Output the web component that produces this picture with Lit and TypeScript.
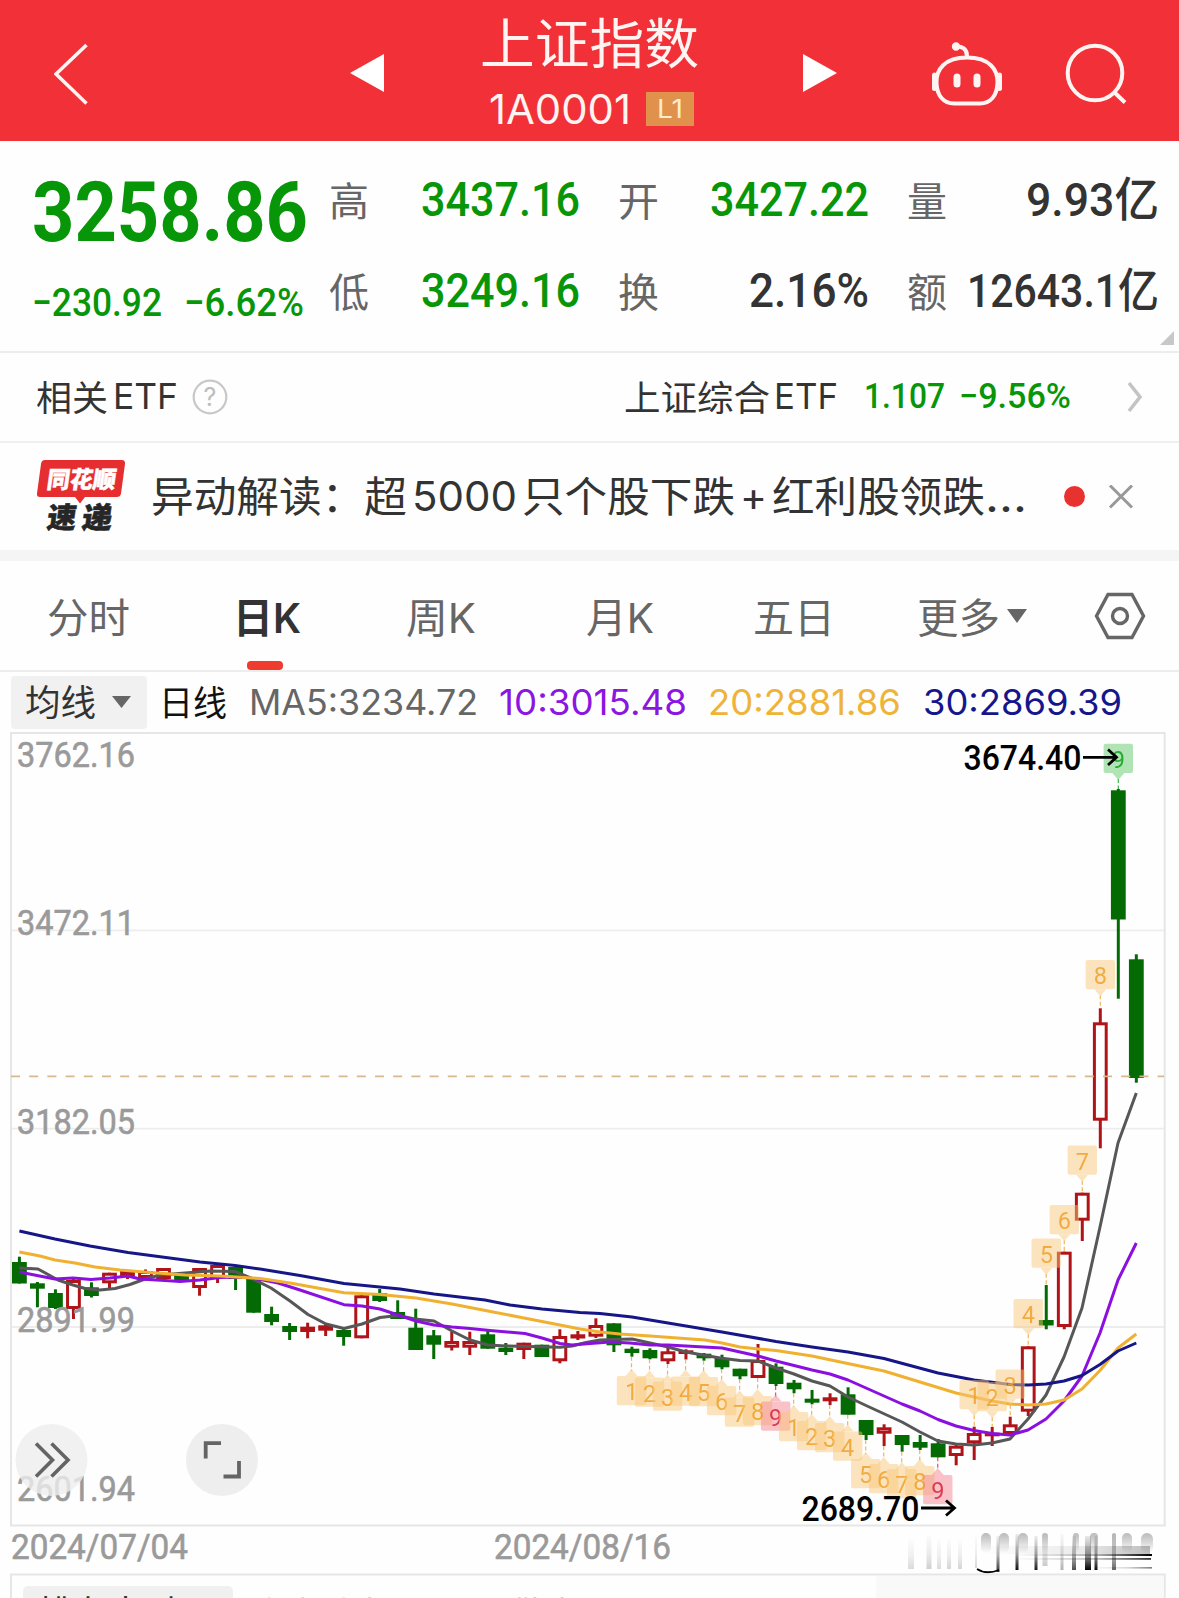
import { LitElement, html, svg, css } from "lit";
import { customElement } from "lit/decorators.js";

const DIN = "din";
const SANS = "sans";

/** A run of text set to an exact advance width; the box is as tall as the capitals, drop lowers the baseline. */
const run = (text: string, width: number, size: number, cls: string, family = DIN, drop = 0) => {
  const cap = Math.round(size * 0.715 * 10) / 10;
  return html`<svg class="run ${family} ${cls}" width=${width} height=${cap}>
    <text x="0" y=${cap + drop} font-size=${size} textLength=${width} lengthAdjust="spacingAndGlyphs">${text}</text>
  </svg>`;
};

/** Candle: direction, open/close top, open/close bottom, high, low (chart units). */
type Candle = ["g" | "r", number, number, number, number];
const CANDLES: Candle[] = [
  ["g", 1262, 1283.5, 1256.7, 1283.5], ["g", 1283.3, 1288.7, 1282, 1307.3], ["g", 1293, 1308, 1289.3, 1309],
  ["r", 1280, 1309, 1279, 1319], ["g", 1287.3, 1296, 1282.3, 1297.5], ["r", 1272.7, 1283.3, 1272.7, 1288],
  ["r", 1271, 1277, 1271, 1279], ["r", 1271, 1278, 1269.5, 1278], ["r", 1268, 1279, 1268, 1279],
  ["g", 1274, 1280, 1274, 1280], ["r", 1268, 1288, 1268, 1295.7], ["r", 1265, 1278, 1264.5, 1283],
  ["g", 1267, 1279, 1267, 1290], ["g", 1279, 1312.7, 1279, 1312.7], ["g", 1314, 1322, 1306.7, 1325.3],
  ["g", 1326, 1332, 1323, 1340], ["r", 1326.7, 1332, 1322.7, 1338.3], ["r", 1325.3, 1330.7, 1323, 1336],
  ["g", 1330, 1337, 1329, 1345.7], ["r", 1295.3, 1338.3, 1295.3, 1338.3], ["g", 1293.3, 1301, 1289, 1302],
  ["g", 1312, 1319, 1300.3, 1319], ["g", 1327.7, 1350, 1308.7, 1350], ["g", 1335.3, 1344.7, 1330, 1359],
  ["r", 1341, 1347.7, 1331.7, 1350.5], ["r", 1341, 1347.7, 1331.7, 1355], ["g", 1334.3, 1348.7, 1331, 1348.7],
  ["g", 1347.7, 1352, 1343, 1355], ["r", 1342.7, 1350, 1342.7, 1359], ["g", 1344.7, 1357, 1344.7, 1357],
  ["r", 1336, 1361.3, 1329.3, 1363.3], ["r", 1334.3, 1338.5, 1331, 1340], ["r", 1325, 1336.7, 1318.3, 1338],
  ["g", 1323.3, 1345.3, 1323.3, 1352], ["g", 1348.7, 1353, 1346.7, 1356.7], ["g", 1350, 1358.3, 1348.3, 1359.3],
  ["r", 1351.3, 1361.3, 1347.7, 1364], ["r", 1350.3, 1354, 1349.3, 1359.5], ["g", 1353.7, 1358.3, 1353, 1360.7],
  ["g", 1358, 1367.3, 1354.7, 1369.3], ["g", 1368.7, 1376.3, 1368.7, 1379.3], ["r", 1360, 1378, 1344, 1378],
  ["g", 1366.7, 1384, 1363.3, 1386], ["g", 1382.7, 1389.3, 1380, 1393.3], ["g", 1398.7, 1402.7, 1390, 1404.3],
  ["r", 1397.3, 1401.3, 1393.3, 1405], ["g", 1394.3, 1414.7, 1387.3, 1414.7], ["g", 1420, 1435, 1420, 1440],
  ["r", 1427.3, 1433.7, 1424.3, 1446], ["g", 1435, 1445, 1435, 1451.7], ["g", 1442, 1447.7, 1435, 1450],
  ["g", 1443.3, 1457.3, 1439, 1457.3], ["r", 1445.7, 1456, 1443, 1465.3], ["r", 1433, 1443.3, 1426.7, 1460],
  ["r", 1432.7, 1436, 1427, 1446], ["r", 1424.3, 1434, 1416.7, 1434], ["r", 1346.3, 1411.7, 1346.3, 1416],
  ["g", 1320, 1325.5, 1285, 1329.3], ["r", 1251.7, 1327, 1251.7, 1329.3], ["r", 1192.7, 1220.7, 1192.7, 1241],
  ["r", 1022.3, 1120.7, 1008.3, 1148.3], ["g", 790.3, 919.5, 789, 998.7], ["g", 959.3, 1078, 954.3, 1082.7],
];
const xAt = (i: number) => 19.4 + i * 18.015;

const AVERAGES: [string, string][] = [
  ["#575757", "19.4,1268 38,1269 58,1280 73,1285 85,1288.5 100,1290 115,1288.5 130,1284.5 145,1279 160,1275 185,1273 210,1271 235,1271.5 253,1279 271,1288 290,1301 308,1314.5 326,1324 344,1328.5 362,1324 380,1317.5 398,1315.5 415,1319 434,1321 452,1331 470,1340 488,1345 506,1346 560,1347.3 572,1346 586,1342.5 600,1340 614,1339.5 632,1339 650,1343 668,1347 686,1352 720,1358 740,1360.5 758,1361 776,1368 794,1374 812,1381 830,1386 848,1397 866,1405.5 902,1422 920,1432 938,1441 956,1444 974,1445 992,1443 1010,1439 1028,1419 1046,1395 1064,1357 1082,1308 1100,1227 1118,1143 1136.3,1093"],
  ["#8b10e0", "19.4,1272 37,1275.5 55,1279 73,1278 91,1279.5 110,1278 128,1276 140,1279 165,1280.5 180,1281.5 200,1280 220,1277.5 240,1277 258,1279 278,1283 300,1290 344,1304.7 362,1306 380,1309 398,1315 416,1321 434,1325 452,1327 470,1328.5 490,1330.5 525,1333.5 542,1338 560,1343.5 572,1345 590,1343.5 610,1342 630,1343 650,1345 668,1345 722,1348 740,1352 758,1356 776,1361 812,1370 830,1374 848,1380 866,1388 902,1404 920,1411 938,1419.5 956,1426 974,1430.5 992,1433.5 1010,1435 1028,1430 1046,1419 1064,1401 1082,1376 1100,1333 1118,1280 1136.3,1243"],
  ["#f0b030", "19.4,1252 40,1256 55,1260 75,1263 95,1267 120,1270 150,1272.5 185,1275 220,1276 260,1278.5 290,1283 344,1292.7 380,1294.5 416,1298 452,1304 488,1311 524,1318 560,1325 580,1329 600,1332 620,1334 650,1336 705,1340 722,1343 740,1347 758,1349 776,1350.5 812,1356 850,1364 884,1371 920,1382 956,1393 992,1401 1010,1404 1028,1405 1046,1404 1064,1400 1082,1389 1100,1370.5 1118,1348 1136.3,1334"],
  ["#161687", "19.4,1231 55,1239 90,1246 128,1252.5 200,1262 235,1265.5 260,1269 300,1275.5 344,1283.5 400,1289 434,1294 485,1300 510,1305 542,1309 580,1312.5 600,1313.5 632,1317 668,1323 722,1332 776,1341.5 812,1347 848,1352 884,1358.5 938,1373 974,1380 1010,1384.5 1028,1385 1046,1384 1064,1381 1082,1375.5 1100,1364.5 1118,1351 1136.3,1343"],
];

/** Sequence tag: digit, candle index, top of its box, side of the candle, tone. */
type Tag = [number, number, number, "up" | "down", "amber" | "pink" | "green"];
const TAGS: Tag[] = [
  [1, 34, 1376, "down", "amber"], [2, 35, 1377.5, "down", "amber"], [3, 36, 1381.5, "down", "amber"],
  [4, 37, 1376.5, "down", "amber"], [5, 38, 1377, "down", "amber"], [6, 39, 1386, "down", "amber"],
  [7, 40, 1397.5, "down", "amber"], [8, 41, 1396, "down", "amber"], [9, 42, 1401.5, "down", "pink"],
  [1, 43, 1412, "down", "amber"], [2, 44, 1421, "down", "amber"], [3, 45, 1423, "down", "amber"],
  [4, 46, 1431.5, "down", "amber"], [5, 47, 1459, "down", "amber"], [6, 48, 1464, "down", "amber"],
  [7, 49, 1469, "down", "amber"], [8, 50, 1466, "down", "amber"], [9, 51, 1475, "down", "pink"],
  [1, 53, 1380, "up", "amber"], [2, 54, 1382, "up", "amber"], [3, 55, 1369.5, "up", "amber"],
  [4, 56, 1299, "up", "amber"], [5, 57, 1238.5, "up", "amber"], [6, 58, 1205, "up", "amber"],
  [7, 59, 1145.5, "up", "amber"], [8, 60, 960, "up", "amber"], [9, 61, 743.7, "up", "green"],
];
const TONES = {
  amber: ["#f9c678", "#f0a22c"],
  pink: ["#f5808c", "#d8243c"],
  green: ["#5cc862", "#10a01c"],
};

/** Vertical streaks of the mark under the chart: x, width, top, bottom, strength. */
const STREAKS: [number, number, number, number, number][] = [
  [911, 6, 1540, 1569, 0.14], [929, 5, 1536, 1569, 0.18], [939, 4, 1540, 1569, 0.14], [949, 4, 1540, 1569, 0.16],
  [960, 4, 1540, 1569, 0.16], [976, 2, 1536, 1568, 0.15], [998, 3, 1536, 1572, 0.8], [1017, 3, 1534, 1570, 0.95],
  [1036, 3, 1536, 1570, 0.9], [1045, 5, 1534, 1566, 0.2], [1062, 3, 1534, 1570, 0.3], [1074, 4, 1536, 1570, 0.7],
  [1088, 6, 1536, 1570, 1], [1096, 3, 1536, 1570, 0.95], [1114, 4, 1534, 1570, 0.6],
];
const SMUDGES: [number, number][] = [[986, 5], [1004, 5], [1023, 5], [1045, 3], [1076, 3], [1094, 4], [1114, 2], [1127, 5], [1147, 6]];

@customElement("kline-chart")
class KlineChart extends LitElement {
  static styles = css`
    :host { display: block; }
    svg { display: block; }
    text { font-family: Roboto, "Liberation Sans", sans-serif; }
    .axis { fill: #9a9a9a; stroke: #9a9a9a; stroke-width: 0.6px; font-size: 35px; }
    .extreme { fill: #000; font-size: 35px; font-weight: 500; }
    .digit { font-size: 23.5px; text-anchor: middle; }
    .soft { filter: blur(0.7px); }
  `;

  private candle([dir, top, bottom, high, low]: Candle, i: number) {
    const x = xAt(i);
    const color = dir === "g" ? "#046a04" : "#b01418";
    const body =
      dir === "g"
        ? svg`<rect x=${x - 7.4} y=${top} width="14.8" height=${bottom - top} fill=${color}></rect>`
        : svg`<rect x=${x - 5.9} y=${top + 1.5} width="11.8" height=${Math.max(bottom - top - 3, 0.6)}
            fill="#fff" stroke=${color} stroke-width="3"></rect>`;
    return svg`<path d="M${x} ${high}V${low}" stroke=${color} stroke-width="3"></path>${body}`;
  }

  private tag([n, i, top, side, tone]: Tag) {
    const x = xAt(i) + (side === "down" ? -0.4 : 0);
    const [fill, ink] = TONES[tone];
    const [, , , high, low] = CANDLES[i];
    const bottom = top + 29.3;
    const tip = side === "up" ? `M${x - 6} ${bottom}h12l-6 7z` : `M${x - 6} ${top}h12l-6 -7z`;
    const lead = side === "up" ? `M${x} ${bottom + 6}V${high}` : `M${x} ${low}V${top - 5}`;
    return svg`
      <path d=${lead} stroke=${ink} stroke-width="1.2" stroke-dasharray="4 2.5" opacity=".8"></path>
      <g opacity=".47" fill=${fill}>
        <rect x=${x - 14.7} y=${top} width="29.4" height="29.3" rx="2"></rect><path d=${tip}></path>
      </g>
      <text class="digit" x=${x} y=${bottom - 5.2} fill=${ink} opacity=".85">${n}</text>`;
  }

  render() {
    const grid = [930.3, 1128.7, 1327];
    const axis: [string, number][] = [["3762.16", 767], ["3472.11", 935], ["3182.05", 1134], ["2891.99", 1332], ["2601.94", 1501]];
    return html`<svg width="1179" height="866" viewBox="0 732 1179 866">
      <defs>
        <linearGradient id="fall" x1="0" y1="0" x2="0" y2="1">
          <stop offset="0" stop-color="#000" stop-opacity=".08"></stop>
          <stop offset=".55" stop-color="#000" stop-opacity=".4"></stop>
          <stop offset="1" stop-color="#000"></stop>
        </linearGradient>
        <linearGradient id="fade" x1="0" y1="0" x2="1" y2="0">
          <stop offset="0" stop-color="#000" stop-opacity="0"></stop>
          <stop offset=".6" stop-color="#000" stop-opacity=".3"></stop>
          <stop offset="1" stop-color="#000"></stop>
        </linearGradient>
        <linearGradient id="puff" x1="0" y1="0" x2="0" y2="1">
          <stop offset="0" stop-color="#555" stop-opacity=".4"></stop>
          <stop offset="1" stop-color="#555" stop-opacity="0"></stop>
        </linearGradient>
      </defs>
      <rect x="11" y="733" width="1153.7" height="792.5" fill="none" stroke="#e6e6e6" stroke-width="2"></rect>
      ${grid.map((y) => svg`<path d=${`M12 ${y}H1164`} stroke="#ededed" stroke-width="1.8"></path>`)}
      ${CANDLES.map((c, i) => this.candle(c, i))}
      <path d="M11 1076.3H1164" stroke="#d6b98c" stroke-width="1.8" stroke-dasharray="9 9.2"></path>
      ${axis.map(([t, y]) => svg`<text class="axis" x="17" y=${y} textLength="118" lengthAdjust="spacingAndGlyphs">${t}</text>`)}
      ${AVERAGES.map(([c, p]) => svg`<polyline points=${p} fill="none" stroke=${c} stroke-width="3" stroke-linejoin="round"></polyline>`)}
      ${TAGS.map((t) => this.tag(t))}
      <text class="extreme" x="963.5" y="770" textLength="118" lengthAdjust="spacingAndGlyphs">3674.40</text>
      <path d="M1083 757.3H1116M1108 749.5L1116.5 757.3L1108 765" fill="none" stroke="#000" stroke-width="2.8"></path>
      <text class="extreme" x="801.5" y="1520.5" textLength="118" lengthAdjust="spacingAndGlyphs">2689.70</text>
      <path d="M921 1508H954M946 1500.5L954.5 1508L946 1515.5" fill="none" stroke="#000" stroke-width="2.8"></path>
      <circle cx="51.5" cy="1460" r="36" fill="#eee" opacity=".8"></circle>
      <path d="M36 1443.5L52.5 1460L36 1476.5M51.5 1443.5L68 1460L51.5 1476.5" fill="none" stroke="#646464" stroke-width="3.6"></path>
      <circle cx="222" cy="1460" r="36" fill="#eee"></circle>
      <path d="M205.7 1458.5V1443.2H221M239 1461V1476.5H223.5" fill="none" stroke="#646464" stroke-width="3.8"></path>
      <text class="axis" x="11" y="1559" textLength="177" lengthAdjust="spacingAndGlyphs">2024/07/04</text>
      <text class="axis" x="494" y="1559" textLength="177" lengthAdjust="spacingAndGlyphs">2024/08/16</text>
      <g class="soft">
        ${SMUDGES.map(([x, r]) => svg`<rect x=${x - r} y="1533" width=${r * 2} height="20" rx=${r} fill="url(#puff)"></rect>`)}
        ${STREAKS.map(([x, w, a, b, o]) => svg`<rect x=${x - w / 2} y=${a} width=${w} height=${b - a} fill="url(#fall)" opacity=${o}></rect>`)}
        <rect x="980" y="1546" width="170" height="8" fill="url(#fade)" opacity=".25"></rect>
      </g>
      <rect x="1015" y="1554" width="137" height="2" fill="url(#fade)"></rect>
      <rect x="1015" y="1558" width="136" height="1.8" fill="url(#fade)" opacity=".8"></rect>
      <rect x="1090" y="1567" width="62" height="1.6" fill="url(#fade)" opacity=".5"></rect>
      <path d="M977 1569Q986 1575 999 1570" fill="none" stroke="#000" stroke-width="1.8"></path>
      <path d="M11 1598V1574.5H1164.7V1598" fill="none" stroke="#e6e6e6" stroke-width="2"></path>
      <rect x="876" y="1576" width="288" height="22" fill="#f9f9f9"></rect>
    </svg>`;
  }
}

@customElement("app-root")
export class AppRoot extends LitElement {
  static styles = css`
    :host {
      display: block; width: 1179px; height: 1598px; overflow: hidden; background: #fefefe;
      font-family: Inter, "Noto Sans CJK SC", sans-serif; color: #333;
    }
    * { box-sizing: border-box; }
    svg { display: block; flex: none; }
    .run { overflow: visible; }
    .run text { fill: currentColor; }
    .din { font-family: Roboto, "Noto Sans CJK SC", sans-serif; }
    .sans { font-family: Inter, "Noto Sans CJK SC", sans-serif; }
    .green { color: #079607; }
    .dark { color: #333; }
    .mid { color: #666; }
    .black { color: #111; }
    .w5 { font-weight: 500; }
    .w6 { font-weight: 600; }
    .w7 { font-weight: 700; }

    .header { height: 141px; background: #f23037; color: #fff4f2; display: flex; padding-left: 54px; }
    .back { margin-top: 43px; }
    .prev { margin: 53px 0 0 260px; }
    .title { width: 220px; margin-left: 96px; padding-top: 23px; display: flex; flex-direction: column; gap: 32px; }
    .code { display: flex; padding-left: 9px; gap: 15px; }
    .level { width: 48px; height: 34px; margin-top: -2px; background: #e0924c; color: #ffeccf; display: flex; align-items: center; justify-content: center; }
    .next { margin: 53px 0 0 102px; }
    .robot { margin: 40px 0 0 93px; }
    .search { margin: 42px 0 0 62px; }

    .quote { height: 212px; display: flex; border-bottom: 2px solid #ededed; position: relative; }
    .last { width: 329px; padding: 40px 0 0 32px; }
    .delta { display: flex; gap: 22px; padding: 47px 0 0 0; }
    .stats { display: grid; grid-template-columns: 289px 289px 252px; grid-template-rows: 34px 34px; row-gap: 57px; padding-top: 41px; }
    .stat { display: flex; align-items: center; justify-content: space-between; }
    .stats .gap { padding-right: 38px; }
    .fold { position: absolute; right: 5px; bottom: 6px; }

    .etf { height: 90px; display: flex; align-items: center; border-bottom: 2px solid #efefef; padding: 0 36px 0 36px; }
    .etf .help { margin: 0 0 0 14px; }
    .etf .fund { margin-left: auto; }
    .rate { display: flex; gap: 14px; padding: 0 0 4px 26px; }
    .more { margin-left: 56px; }
    .news { height: 107px; display: flex; align-items: center; padding-left: 36px; }
    .headline { display: flex; align-items: center; gap: 5px; padding-left: 25px; }
    .news .actions { margin-left: 36px; }
    .logo { overflow: visible; }
    .band { height: 11px; background: #f5f5f5; }

    .tabs { height: 111px; display: flex; align-items: center; border-bottom: 2px solid #ededed; padding-left: 47px; position: relative; }
    .mark { position: absolute; left: 247px; bottom: 0; width: 36px; height: 9px; border-radius: 4px; background: #f03c2e; }
    .averages { height: 60px; display: flex; align-items: center; padding: 0 0 0 11px; }
    .pick { width: 136px; height: 53px; border-radius: 4px; background: #f1f1f1; display: flex; align-items: center; padding-left: 14px; gap: 16px; }
    .violet { color: #8a16e0; }
    .amber { color: #eeb43a; }
    .navy { color: #16168c; }
    .lower { height: 12px; margin: -12px 0 0 23px; position: relative; overflow: hidden; display: flex; }
    .lower .chip { width: 210px; background: #f0f0f0; border-radius: 5px 5px 0 0; padding: 6px 0 0 15px; font-size: 35px; line-height: 42px; color: #333; }
    .lower .hint { padding: 6px 0 0 22px; font-size: 33px; line-height: 42px; color: #f0d890; }
    .lower .cool { padding: 6px 0 0 126px; font-size: 33px; line-height: 42px; color: #c8cddc; }
  `;

  render() {
    return html`
      <div class="header">
        <svg class="back" width="36" height="62" viewBox="54 43 36 62"><path d="M86.500 45L56 74L86.500 103.500" fill="none" stroke="currentColor" stroke-width="3.6"/></svg>
        <svg class="prev" width="34" height="40" viewBox="350 53 34 40"><path d="M350 73L384 54V92Z" fill="#fff"/></svg>
        <div class="title">
          ${run("上证指数", 219, 54, "", SANS, 2.5)}
          <div class="code">${run("1A0001", 142, 41, "", SANS, 0.8)}<div class="level">${run("L1", 26, 25, "", SANS)}</div></div>
        </div>
        <svg class="next" width="36" height="40" viewBox="803 53 36 40"><path d="M804 54V92L838 73Z" fill="#fff"/></svg>
        <svg class="robot" width="72" height="68" viewBox="931 40 72 68" fill="none" stroke="currentColor" stroke-width="4">
          <path d="M967 57.500C990 57.500 997.500 70 997.500 82C997.500 96 990 103.500 980 103.500H954C944 103.500 936.500 96 936.500 82C936.500 70 944 57.500 967 57.500Z"/>
          <path d="M967 56C967 49 962 46 956 46.500"/>
          <circle cx="956" cy="46.500" r="3.200" fill="currentColor" stroke-width="2"/>
          <path d="M934.500 75V88.500M999.500 75V88.500" stroke-width="5" stroke-linecap="round"/>
          <path d="M957 77V84M977 77V84" stroke-width="7" stroke-linecap="round"/>
        </svg>
        <svg class="search" width="62" height="64" viewBox="1064 42 62 64" fill="none" stroke="currentColor" stroke-width="4">
          <circle cx="1094" cy="73" r="27.300"/><path d="M1113 92L1124 102.500"/>
        </svg>
      </div>

      <div class="quote">
        <div class="last">
          ${run("3258.86", 276, 84, "green w7")}
          <div class="delta">${run("−230.92", 130, 39.5, "green w5")}${run("−6.62%", 120, 39.5, "green w5")}</div>
        </div>
        <div class="stats">
          <div class="stat gap">${run("高", 40, 40, "mid", SANS, 2.5)}${run("3437.16", 159, 48, "green w5")}</div>
          <div class="stat gap">${run("开", 41, 40, "mid", SANS, 2.5)}${run("3427.22", 159, 48, "green w5")}</div>
          <div class="stat">${run("量", 40, 40, "mid", SANS, 2.5)}${run("9.93亿", 133, 47, "dark w5")}</div>
          <div class="stat gap">${run("低", 40, 40, "mid", SANS, 2.5)}${run("3249.16", 159, 48, "green w5")}</div>
          <div class="stat gap">${run("换", 41, 40, "mid", SANS, 2.5)}${run("2.16%", 120, 48, "dark w5")}</div>
          <div class="stat">${run("额", 40, 40, "mid", SANS, 2.5)}${run("12643.1亿", 192, 47, "dark w5")}</div>
        </div>
        <svg class="fold" width="14" height="14"><path d="M14 0V14H0Z" fill="#c8c8c8"/></svg>
      </div>

      <div class="etf">
        ${run("相关", 72, 35.5, "dark", SANS, 1.5)}&nbsp;${run("ETF", 65, 35.5, "dark", SANS)}
        <svg class="help" width="36" height="36" viewBox="0 0 36 36">
          <circle cx="18" cy="18" r="16.300" fill="none" stroke="#c8c8c8" stroke-width="2.200"/>
          <text x="18" y="26.500" font-size="25" text-anchor="middle" fill="#bdbdbd">?</text>
        </svg>
        <div class="fund">${run("上证综合", 146, 35.5, "dark", SANS, 1.5)}</div>&nbsp;${run("ETF", 64, 35.5, "dark", SANS)}
        <div class="rate">${run("1.107", 81, 34.5, "green w5")}${run("−9.56%", 112, 34.5, "green w5")}</div>
        <svg class="more" width="16" height="32" viewBox="0 0 16 32"><path d="M2 2L13 16L2 30" fill="none" stroke="#c4c4c4" stroke-width="3.600"/></svg>
      </div>

      <div class="news">
        <svg class="logo" width="90" height="76" viewBox="36 457 90 76" font-family="Noto Sans CJK SC" font-weight="900">
          <path d="M45 458H121.500Q125.500 458 125 462L121 491.500Q120.500 495 116.500 495H85L80 501.500L75 495H40Q36.500 495 37 491.500L41 462Q41.500 458 45 458Z" fill="#e62e30"/>
          <text transform="translate(46 486) skewX(-8)" font-size="23.500" textLength="69" lengthAdjust="spacingAndGlyphs" fill="#fff" stroke="#fff" stroke-width=".5">同花顺</text>
          <text transform="translate(46 526) skewX(-8)" font-size="29" textLength="29" lengthAdjust="spacingAndGlyphs" fill="#262626" stroke="#262626" stroke-width=".6">速</text>
          <text transform="translate(81 526) skewX(-8)" font-size="29" textLength="30" lengthAdjust="spacingAndGlyphs" fill="#262626" stroke="#262626" stroke-width=".6">递</text>
        </svg>
        <div class="headline">
          ${run("异动解读：超", 256, 41.5, "dark", SANS, 0.5)}
          ${run("5000", 105, 41, "dark", SANS)}
          ${run("只个股下跌", 213, 41.5, "dark", SANS, 0.5)}
          ${run("+", 27, 40, "dark", SANS)}
          ${run("红利股领跌", 213, 41.5, "dark", SANS, 0.5)}
        </div>
        ${run("...", 42, 43, "dark", SANS)}
        <svg class="actions" width="72" height="24" viewBox="1062 484 72 24">
          <circle cx="1073.500" cy="495.500" r="10.500" fill="#e8322f"/><path d="M1109 484.500L1131 506.500M1131 484.500L1109 506.500" stroke="#999" stroke-width="3"/>
        </svg>
      </div>
      <div class="band"></div>

      <div class="tabs">
        ${run("分时", 83, 41, "mid", SANS, 2.5)}
        <div style="width:103px"></div>${run("日K", 68, 41, "dark w6", SANS, 2.5)}
        <div style="width:105px"></div>${run("周K", 70, 41, "mid", SANS, 2.5)}
        <div style="width:110px"></div>${run("月K", 68, 41, "mid", SANS, 2.5)}
        <div style="width:99px"></div>${run("五日", 82, 41, "mid", SANS, 2.5)}
        <div style="width:82px"></div>${run("更多", 83, 41, "mid", SANS, 2.5)}
        <svg style="margin-left:7px" width="20" height="14"><path d="M0 0H20L10 14Z" fill="#666"/></svg>
        <svg style="margin-left:66px" width="54" height="50" viewBox="0 0 54 50" fill="none" stroke="#666" stroke-width="3.400">
          <path d="M15 3.500H39L50.500 25L39 46.500H15L3.500 25Z"/><circle cx="27" cy="25" r="7.500"/>
        </svg>
        <div class="mark"></div>
      </div>

      <div class="averages">
        <div class="pick">${run("均线", 71, 36, "dark", SANS, 1.2)}<svg width="19" height="12"><path d="M0 0H19L9.500 12Z" fill="#666"/></svg></div>
        <div style="width:12px"></div>${run("日线", 68, 35, "black", SANS, 1)}
        <div style="width:22px"></div>${run("MA5:3234.72", 229, 35, "mid", SANS)}
        <div style="width:21px"></div>${run("10:3015.48", 188, 35, "violet", SANS)}
        <div style="width:21px"></div>${run("20:2881.86", 193, 35, "amber", SANS)}
        <div style="width:22px"></div>${run("30:2869.39", 199, 35, "navy", SANS)}
      </div>

      <kline-chart></kline-chart>
      <div class="lower"><div class="chip">排布大时</div><div class="hint">主力动向</div><div class="cool">散户</div></div>
    `;
  }
}
